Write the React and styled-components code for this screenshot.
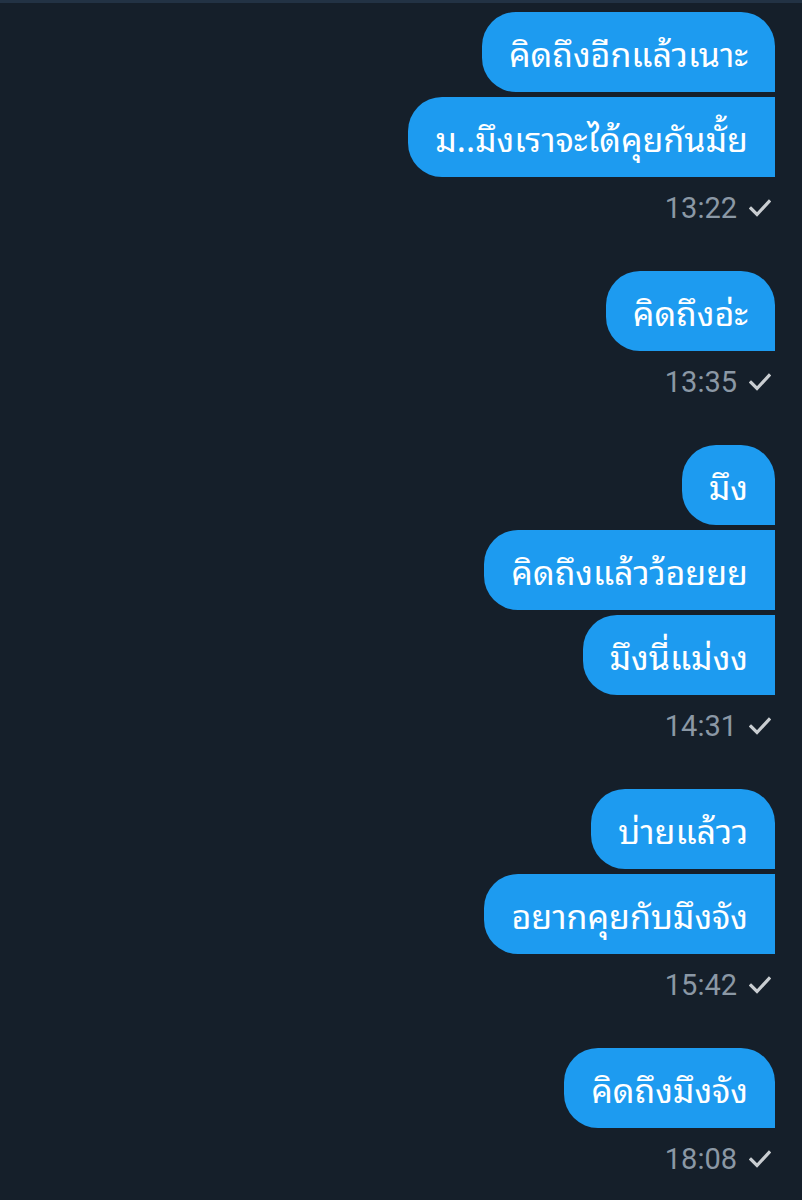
import React from "react";
import styled, { createGlobalStyle } from "styled-components";

const Global = createGlobalStyle`
  html, body { margin: 0; padding: 0; background: #151f2a; }
  body { font-family: "Noto Sans", Roboto, sans-serif; }
`;

const Page = styled.div`
  min-height: 1200px;
  background: #151f2a;
  border-top: 3px solid #223244;
  box-sizing: border-box;
  padding: 9px 27px 0 0;
  display: flex;
  flex-direction: column;
  gap: 46px;
`;

const Group = styled.div`
  display: flex;
  flex-direction: column;
  align-items: flex-end;
  gap: 5px;
`;

const Bubble = styled.div`
  background: #1d9bf0;
  color: #ffffff;
  height: 80px;
  box-sizing: border-box;
  padding: 0 27px;
  display: flex;
  align-items: center;
  font-family: "Noto Sans Thai Looped", Loma, Garuda, Kinnari, "Noto Sans Thai", "Noto Sans", "DejaVu Sans", sans-serif;
  font-size: 34px;
  line-height: 1;
  border-radius: ${(p) => (p.$first ? "34px 34px 0 34px" : "34px 0 0 34px")};
  white-space: nowrap;
`;

const Meta = styled.div`
  margin-top: 9px;
  height: 34px;
  display: flex;
  align-items: center;
  gap: 12px;
  padding-right: 4px;
  font-family: Roboto, "Noto Sans", sans-serif;
  font-size: 29px;
  color: #8b98a5;
`;

const Check = () => (
  <svg width="22" height="18" viewBox="0 0 22 18" fill="none">
    <path d="M2 9.5 L8 15.5 L20 2.5" stroke="#c9cdd1" strokeWidth="3.2" strokeLinecap="square" />
  </svg>
);

const groups = [
  { time: "13:22", msgs: ["คิดถึงอีกแล้วเนาะ", "ม..มึงเราจะได้คุยกันมั้ย"] },
  { time: "13:35", msgs: ["คิดถึงอ่ะ"] },
  { time: "14:31", msgs: ["มึง", "คิดถึงแล้วว้อยยย", "มึงนี่แม่งง"] },
  { time: "15:42", msgs: ["บ่ายแล้วว", "อยากคุยกับมึงจัง"] },
  { time: "18:08", msgs: ["คิดถึงมึงจัง"] },
];

export default function App() {
  return (
    <>
      <Global />
      <Page>
        {groups.map((g) => (
          <Group key={g.time}>
            {g.msgs.map((m, i) => (
              <Bubble key={i} $first={i === 0}>
                {m}
              </Bubble>
            ))}
            <Meta>
              {g.time}
              <Check />
            </Meta>
          </Group>
        ))}
      </Page>
    </>
  );
}
